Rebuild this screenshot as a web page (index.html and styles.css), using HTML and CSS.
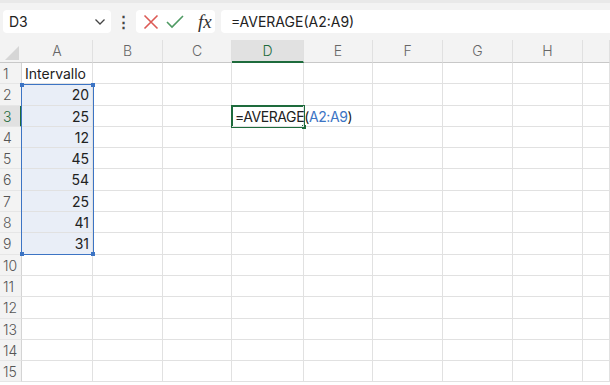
FILE: index.html
```html
<!DOCTYPE html>
<html lang="it">
<head>
  <meta charset="UTF-8" />
  <title>Foglio</title>
  <link rel="stylesheet" href="styles.css">
</head>
<body>
  <div class="toolbar">
    <div class="namebox">
      <span>D3</span>
      <svg class="chev" width="12" height="8" viewBox="0 0 12 8"><path d="M1.5 1.5 L6 6 L10.5 1.5" fill="none" stroke="#444" stroke-width="1.3"/></svg>
    </div>
    <div class="dots">&#8942;</div>
    <div class="fx-box">
      <svg width="18" height="18" viewBox="0 0 18 18"><path d="M2.5 2.5 L15.5 15.5 M15.5 2.5 L2.5 15.5" stroke="#dc5a55" stroke-width="1.6" fill="none"/></svg>
      <svg width="20" height="18" viewBox="0 0 20 18"><path d="M2 9 L7 14 L18 3" stroke="#4f9a63" stroke-width="1.6" fill="none"/></svg>
      <span class="fx">fx</span>
    </div>
    <div class="formula">=AVERAGE(A2:A9)</div>
  </div>

  <div class="sheet">
    <div class="grid">
      <div class="corner"><svg width="21" height="22" viewBox="0 0 21 22"><path d="M19 6 L19 20 L5 20 Z" fill="#d6d6d6"/></svg></div>
      <div class="ch">A</div><div class="ch">B</div><div class="ch">C</div><div class="ch active">D</div>
      <div class="ch">E</div><div class="ch">F</div><div class="ch">G</div><div class="ch">H</div><div class="ch"></div>

      <div class="rh">1</div><div class="c">Intervallo</div><div class="c"></div><div class="c"></div><div class="c"></div><div class="c"></div><div class="c"></div><div class="c"></div><div class="c"></div><div class="c"></div>
      <div class="rh">2</div><div class="c num">20</div><div class="c"></div><div class="c"></div><div class="c"></div><div class="c"></div><div class="c"></div><div class="c"></div><div class="c"></div><div class="c"></div>
      <div class="rh active">3</div><div class="c num">25</div><div class="c"></div><div class="c"></div><div class="c edit">=AVERAGE(<span class="ref">A2:A9</span>)</div><div class="c"></div><div class="c"></div><div class="c"></div><div class="c"></div><div class="c"></div>
      <div class="rh">4</div><div class="c num">12</div><div class="c"></div><div class="c"></div><div class="c"></div><div class="c"></div><div class="c"></div><div class="c"></div><div class="c"></div><div class="c"></div>
      <div class="rh">5</div><div class="c num">45</div><div class="c"></div><div class="c"></div><div class="c"></div><div class="c"></div><div class="c"></div><div class="c"></div><div class="c"></div><div class="c"></div>
      <div class="rh">6</div><div class="c num">54</div><div class="c"></div><div class="c"></div><div class="c"></div><div class="c"></div><div class="c"></div><div class="c"></div><div class="c"></div><div class="c"></div>
      <div class="rh">7</div><div class="c num">25</div><div class="c"></div><div class="c"></div><div class="c"></div><div class="c"></div><div class="c"></div><div class="c"></div><div class="c"></div><div class="c"></div>
      <div class="rh">8</div><div class="c num">41</div><div class="c"></div><div class="c"></div><div class="c"></div><div class="c"></div><div class="c"></div><div class="c"></div><div class="c"></div><div class="c"></div>
      <div class="rh">9</div><div class="c num">31</div><div class="c"></div><div class="c"></div><div class="c"></div><div class="c"></div><div class="c"></div><div class="c"></div><div class="c"></div><div class="c"></div>
      <div class="rh">10</div><div class="c"></div><div class="c"></div><div class="c"></div><div class="c"></div><div class="c"></div><div class="c"></div><div class="c"></div><div class="c"></div><div class="c"></div>
      <div class="rh">11</div><div class="c"></div><div class="c"></div><div class="c"></div><div class="c"></div><div class="c"></div><div class="c"></div><div class="c"></div><div class="c"></div><div class="c"></div>
      <div class="rh">12</div><div class="c"></div><div class="c"></div><div class="c"></div><div class="c"></div><div class="c"></div><div class="c"></div><div class="c"></div><div class="c"></div><div class="c"></div>
      <div class="rh">13</div><div class="c"></div><div class="c"></div><div class="c"></div><div class="c"></div><div class="c"></div><div class="c"></div><div class="c"></div><div class="c"></div><div class="c"></div>
      <div class="rh">14</div><div class="c"></div><div class="c"></div><div class="c"></div><div class="c"></div><div class="c"></div><div class="c"></div><div class="c"></div><div class="c"></div><div class="c"></div>
      <div class="rh">15</div><div class="c"></div><div class="c"></div><div class="c"></div><div class="c"></div><div class="c"></div><div class="c"></div><div class="c"></div><div class="c"></div><div class="c"></div>
    </div>
    <div class="range">
      <i class="h tl"></i><i class="h tr"></i><i class="h bl"></i><i class="h br"></i>
    </div>
    <div class="cursor"><i class="h br"></i></div>
  </div>
</body>
</html>
```

FILE: styles.css
```css
body {
  margin: 0;
  width: 610px;
  height: 385px;
  overflow: hidden;
  background: #fff;
  font-family: Inter, 'Open Sans', sans-serif;
  color: #222;
}
.toolbar {
  height: 40px;
  box-sizing: border-box;
  padding: 7px 0 0 3px;
  background: #f3f3f3;
  border-top: 3px solid #e9e9e9;
  display: flex;
  align-items: flex-start;
}
.namebox {
  width: 108px;
  height: 23px;
  background: #fff;
  border-radius: 4px;
  display: flex;
  align-items: center;
  justify-content: space-between;
  padding: 0 5px 0 6px;
  box-sizing: border-box;
  font-size: 14px;
}
.chev {
  margin-top: 1px;
}
.dots {
  width: 25px;
  text-align: center;
  font-size: 15px;
  line-height: 23px;
  color: #444;
  font-weight: bold;
}
.fx-box {
  width: 79px;
  height: 23px;
  background: #fff;
  border-radius: 4px;
  display: flex;
  align-items: center;
  gap: 5px;
  padding-left: 6px;
  box-sizing: border-box;
}
.fx {
  font-family: 'Liberation Serif', serif;
  font-style: italic;
  font-size: 19px;
  margin-left: 8px;
  color: #333;
}
.formula {
  flex: 1;
  height: 23px;
  margin-left: 6px;
  background: #fff;
  border-radius: 4px 0 0 4px;
  padding-left: 10px;
  font-size: 14px;
  line-height: 23px;
}
.sheet {
  position: relative;
}
.grid {
  display: grid;
  grid-template-columns: 22px 71px 70px 69px 72px 69px 70px 70px 70px 1fr;
  grid-template-rows: 23px repeat(15, 21.3px);
}
.corner {
  background: #f3f3f3;
  border-bottom: 1px solid #c8c8c8;
  box-sizing: border-box;
}
.ch {
  background: #f3f3f3;
  border-right: 1px solid #e0e0e0;
  border-bottom: 1px solid #c8c8c8;
  box-sizing: border-box;
  text-align: center;
  font-size: 14px;
  line-height: 22px;
  color: #666;
  font-weight: 300;
}
.ch.active {
  background: #e1e1e1;
  border-bottom: 2px solid #1e6b3c;
  color: #1e6b3c;
}
.rh {
  background: #f3f3f3;
  border-right: 1px solid #d4d4d4;
  border-bottom: 1px solid #e6e6e6;
  box-sizing: border-box;
  font-size: 14px;
  color: #555;
  padding-left: 3px;
  line-height: 21px;
  font-weight: 300;
}
.rh.active {
  background: #e1e1e1;
  border-right: 2px solid #1e6b3c;
  color: #1e6b3c;
}
.c {
  border-right: 1px solid #e1e1e1;
  border-bottom: 1px solid #e1e1e1;
  box-sizing: border-box;
  font-size: 14px;
  line-height: 21px;
  padding: 0 3px;
  white-space: nowrap;
}
.num {
  text-align: right;
  background: #e9eef7;
}
.edit {
  position: relative;
  z-index: 2;
  overflow: visible;
  padding-left: 3px;
  letter-spacing: -0.4px;
}
.ref {
  color: #3c74c4;
}
.range {
  position: absolute;
  left: 21px;
  top: 44.3px;
  width: 73px;
  height: 170.4px;
  box-sizing: border-box;
  border: 1px solid #3c74c4;
}
.cursor {
  position: absolute;
  left: 231px;
  top: 65px;
  width: 74px;
  height: 23px;
  box-sizing: border-box;
  border: 2px solid #1e6b3c;
  z-index: 1;
}
.h {
  position: absolute;
  width: 4px;
  height: 4px;
  background: #3c74c4;
}
.tl { left: -2px; top: -2px; }
.tr { right: -2px; top: -2px; }
.bl { left: -2px; bottom: -2px; }
.br { right: -2px; bottom: -2px; }
.cursor .h { background: #1e6b3c; right: -3px; bottom: -3px; }
```
